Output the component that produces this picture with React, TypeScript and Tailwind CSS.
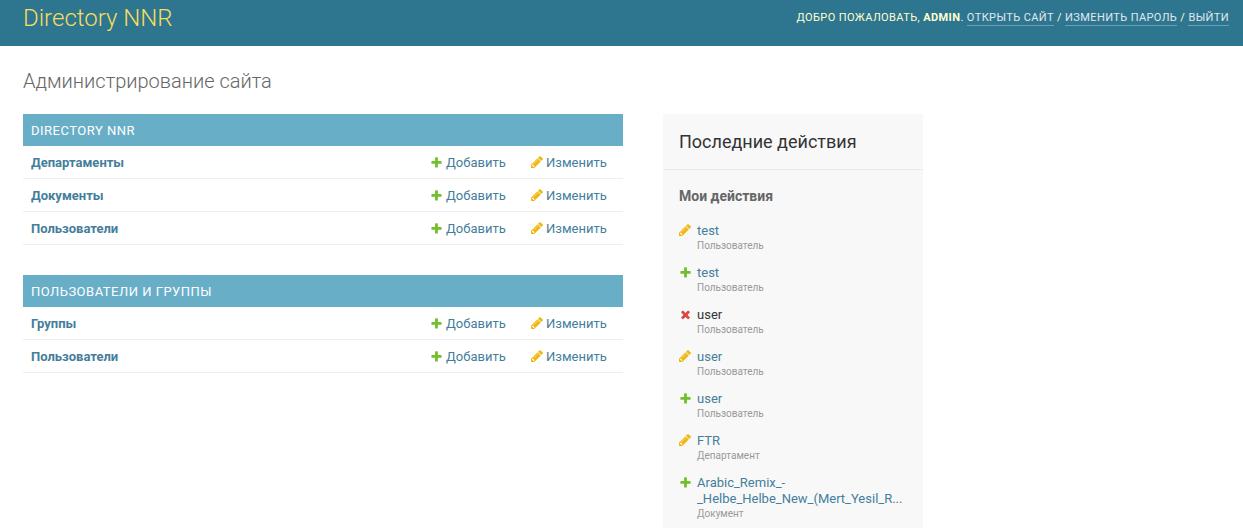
import React from "react";

const font = { fontFamily: "Roboto, 'Liberation Sans', sans-serif" };

const AddIcon = ({ className = "" }: { className?: string }) => (
  <svg viewBox="0 0 1792 1792" className={className} fill="#70bf2b">
    <path d="M1600 796v192q0 40-28 68t-68 28h-416v416q0 40-28 68t-68 28h-192q-40 0-68-28t-28-68v-416h-416q-40 0-68-28t-28-68v-192q0-40 28-68t68-28h416v-416q0-40 28-68t68-28h192q40 0 68 28t28 68v416h416q40 0 68 28t28 68z" />
  </svg>
);

const ChangeIcon = ({ className = "" }: { className?: string }) => (
  <svg viewBox="0 0 1792 1792" className={className} fill="#efb80b">
    <path d="M491 1536l91-91-235-235-91 91v107h128v128h107zm523-928q0-22-22-22-10 0-17 7l-542 542q-7 7-7 17 0 22 22 22 10 0 17-7l542-542q7-7 7-17zm-54-192l416 416-832 832h-416v-416zm683 96q0 53-37 90l-166 166-416-416 166-165q36-38 90-38 53 0 91 38l235 234q37 39 37 91z" />
  </svg>
);

const DeleteIcon = ({ className = "" }: { className?: string }) => (
  <svg viewBox="0 0 1792 1792" className={className} fill="#dd4646">
    <path d="M1490 1322q0 40-28 68l-136 136q-28 28-68 28t-68-28l-294-294-294 294q-28 28-68 28t-68-28l-136-136q-28-28-28-68t28-68l294-294-294-294q-28-28-28-68t28-68l136-136q28-28 68-28t68 28l294 294 294-294q28-28 68-28t68 28l136 136q28 28 28 68t-28 68l-294 294 294 294q28 28 28 68z" />
  </svg>
);

const modules: { title: string; models: string[] }[] = [
  { title: "Directory NNR", models: ["Департаменты", "Документы", "Пользователи"] },
  { title: "Пользователи и группы", models: ["Группы", "Пользователи"] },
];

const actions: { type: "add" | "change" | "delete"; name: React.ReactNode; kind: string }[] = [
  { type: "change", name: "test", kind: "Пользователь" },
  { type: "add", name: "test", kind: "Пользователь" },
  { type: "delete", name: "user", kind: "Пользователь" },
  { type: "change", name: "user", kind: "Пользователь" },
  { type: "add", name: "user", kind: "Пользователь" },
  { type: "change", name: "FTR", kind: "Департамент" },
  {
    type: "add",
    name: (
      <>
        Arabic_Remix_-
        <br />
        _Helbe_Helbe_New_(Mert_Yesil_R...
      </>
    ),
    kind: "Документ",
  },
];

export default function App() {
  return (
    <div className="w-[1243px] h-[528px] overflow-hidden bg-white text-[#333]" style={font}>
      {/* header */}
      <div className="h-[46px] bg-[#2e7590] flex justify-between items-start pl-[23px] pr-[14px]">
        <h1 className="text-[24px] leading-[36px] font-light text-[#f5dd5d]">Directory NNR</h1>
        <div className="text-[11px] leading-[36px] uppercase tracking-[0.4px] text-[#ffc]">
          Добро пожаловать, <strong className="font-bold">admin</strong>.{" "}
          <a className="text-white/85 border-b border-white/30 pb-[1px]">Открыть сайт</a> /{" "}
          <a className="text-white/85 border-b border-white/30 pb-[1px]">Изменить пароль</a> /{" "}
          <a className="text-white/85 border-b border-white/30 pb-[1px]">Выйти</a>
        </div>
      </div>

      {/* content */}
      <div className="pl-[23px]">
        <h1 className="mt-[23px] text-[20px] leading-[24px] font-light text-[#666]">Администрирование сайта</h1>
        <div className="flex gap-[40px] mt-[21px]">
          <div className="w-[600px] flex flex-col gap-[30px]">
            {modules.map((m) => (
              <div key={m.title}>
                <div className="h-[32px] px-2 pt-[1px] text-[13px] leading-[32px] uppercase tracking-[0.5px] font-normal text-white bg-[#68aec7]">
                  {m.title}
                </div>
                {m.models.map((name, i) => (
                  <div key={i} className="flex items-center h-[33px] pt-[2px] border-b border-[#eee] text-[13px] leading-[16px]">
                    <a className="flex-1 pl-2 font-bold text-[#447e9b]">{name}</a>
                    <a className="w-[99px] pl-[7px] flex items-center text-[#447e9b]">
                      <AddIcon className="w-[13px] h-[13px] mr-[3px] mt-[-1px]" />
                      Добавить
                    </a>
                    <a className="w-[101px] pl-[8px] flex items-center text-[#447e9b]">
                      <ChangeIcon className="w-[14px] h-[14px] mr-[2px] mt-[-2px]" />
                      Изменить
                    </a>
                  </div>
                ))}
              </div>
            ))}
          </div>

          {/* sidebar */}
          <div className="w-[260px] bg-[#f8f8f8] min-h-[420px]">
            <h2 className="px-4 pt-4 pb-[15px] text-[18px] leading-[24px] text-[#333] border-b border-[#eaeaea]">
              Последние действия
            </h2>
            <h3 className="px-4 mt-[16px] text-[14px] leading-[20px] font-bold text-[#666]">Мои действия</h3>
            <ul className="px-4 mt-[16px]">
              {actions.map((a, i) => (
                <li key={i} className="relative pl-[18px] pt-[1px] mb-[11px]">
                  <span className="absolute left-0 top-[2px]">
                    {a.type === "add" && <AddIcon className="w-[13px] h-[13px]" />}
                    {a.type === "change" && <ChangeIcon className="w-[14px] h-[14px] -ml-[1px] -mt-[1px]" />}
                    {a.type === "delete" && <DeleteIcon className="w-[13px] h-[13px]" />}
                  </span>
                  <div className={`text-[13px] leading-[16px] ${a.type === "delete" ? "text-[#333]" : "text-[#447e9b]"}`}>
                    {a.name}
                  </div>
                  <div className="text-[10px] leading-[14px] text-[#999]">{a.kind}</div>
                </li>
              ))}
            </ul>
          </div>
        </div>
      </div>
    </div>
  );
}
